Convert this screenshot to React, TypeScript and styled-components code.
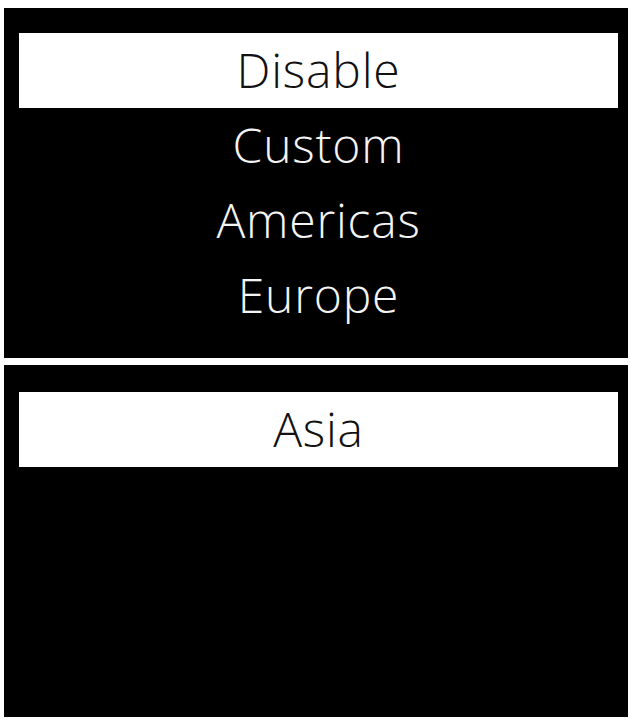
import React from 'react';
import styled, { createGlobalStyle } from 'styled-components';

const GlobalStyle = createGlobalStyle`
    html, body {
        margin: 0;
        padding: 0;
        background: #ffffff;
    }
    body {
        font-family: "Open Sans", "Noto Sans", "DejaVu Sans", sans-serif;
    }
`;

const Page = styled.div`
    width: 631px;
    height: 720px;
    box-sizing: border-box;
    padding: 8px 3px 3px 4px;
    display: flex;
    flex-direction: column;
    gap: 7px;
`;

const Panel = styled.div<{ $grow?: boolean; $top: number }>`
    background: #000;
    box-sizing: border-box;
    padding: ${props => props.$top}px 10px 25px 15px;
    display: flex;
    flex-direction: column;
    flex: ${props => props.$grow ? '1' : 'none'};
`;

const Option = styled.div<{ $selected: boolean }>`
    height: 75px;
    display: flex;
    align-items: center;
    justify-content: center;
    padding-bottom: 3px;
    box-sizing: border-box;
    font-size: 48px;
    font-weight: 300;
    letter-spacing: 0.8px;
    color: ${props => props.$selected ? '#111' : '#f4f4f4'};
    background: ${props => props.$selected ? '#ffffff' : 'transparent'};
`;

const firstPage = ['Disable', 'Custom', 'Americas', 'Europe'];
const secondPage = ['Asia'];

export default function App() {
    return (
        <>
            <GlobalStyle />
            <Page>
                <Panel $top={25}>
                    {firstPage.map((name, i) =>
                        <Option key={name} $selected={i === 0}>{name}</Option>
                    )}
                </Panel>
                <Panel $top={27} $grow>
                    {secondPage.map((name, i) =>
                        <Option key={name} $selected={i === 0}>{name}</Option>
                    )}
                </Panel>
            </Page>
        </>
    );
}
